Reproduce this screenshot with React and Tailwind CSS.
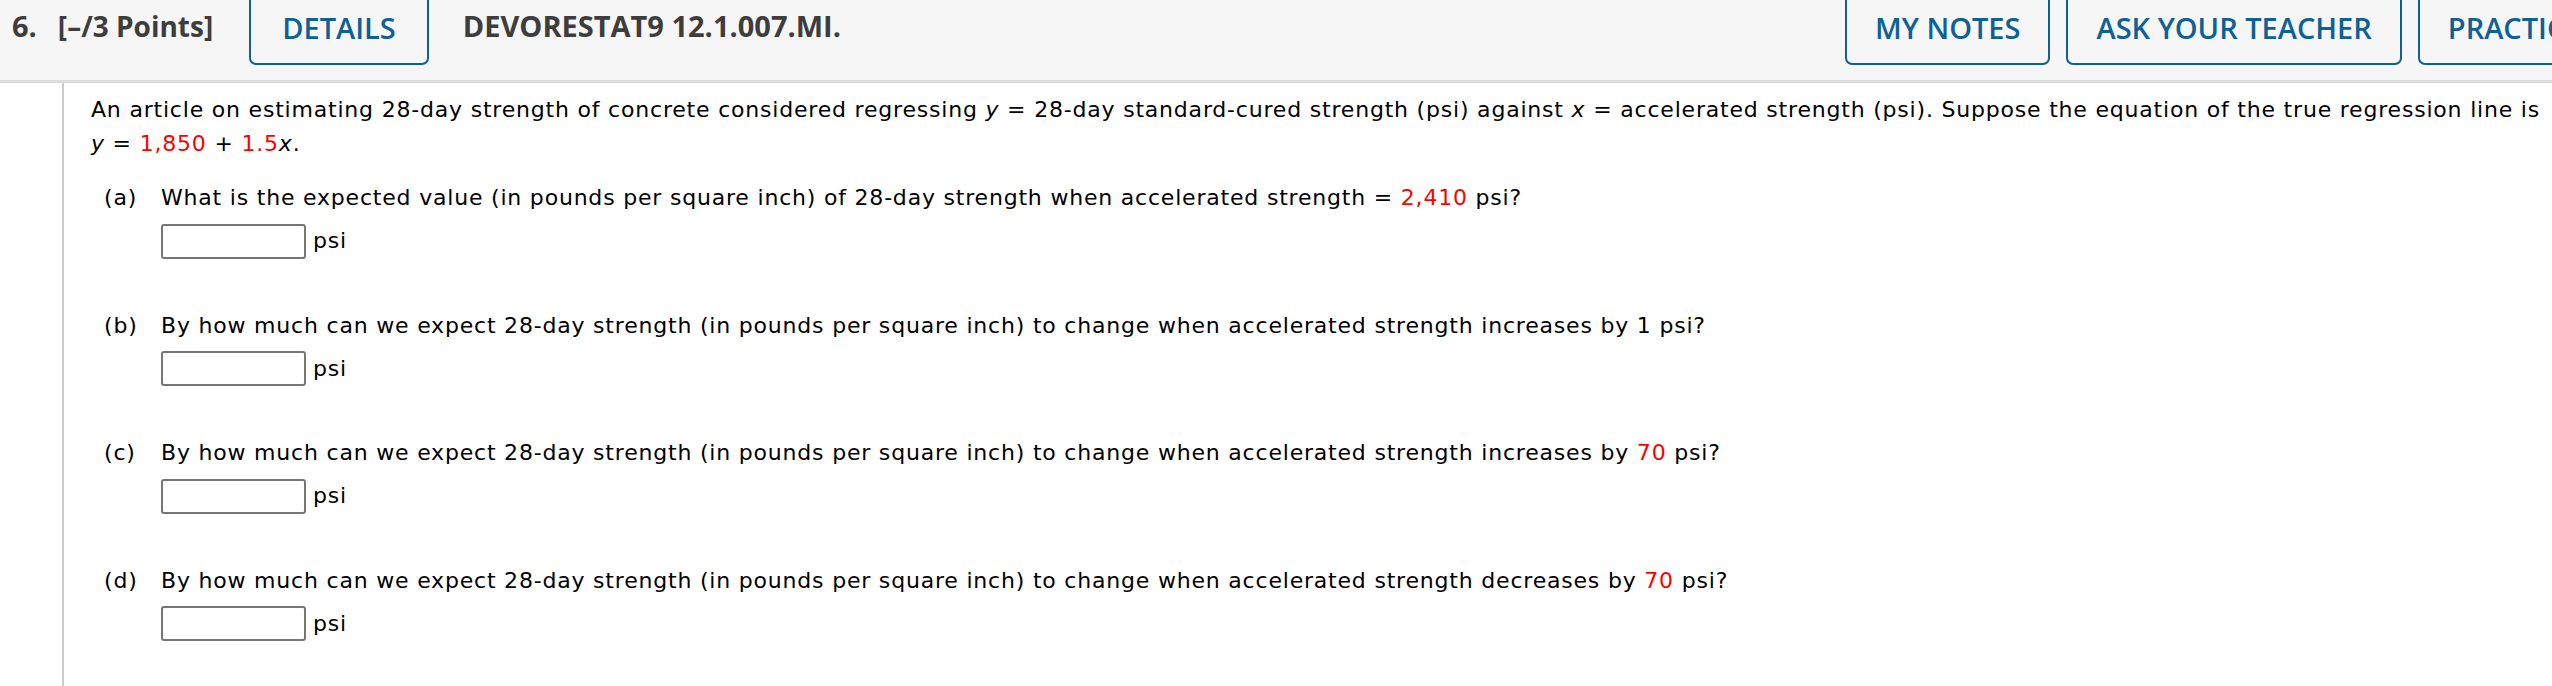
import React from "react";

const HEAD = { fontFamily: '"Open Sans", "Liberation Sans", sans-serif' };
const BODY = { fontFamily: '"DejaVu Sans", Verdana, sans-serif' };

function Red({ children }) {
  return <span className="text-[#ff0000]">{children}</span>;
}

function HeaderButton({ children, wide }) {
  return (
    <div
      className={`-mt-[6px] h-[71px] shrink-0 rounded-b-[7px] border-2 border-[#0e6194] bg-[#f6f6f6] pt-[12px] font-semibold text-[29px] leading-[40px] text-[#0e6194] whitespace-nowrap ${
        wide ? "px-[31px]" : "px-[28px]"
      }`}
    >
      {children}
    </div>
  );
}

function Answer() {
  return (
    <div className="mt-[9px] flex h-[35px] items-center">
      <div className="h-[35px] w-[145px] rounded-[3px] border-2 border-[#767676] bg-white" />
      <span className="ml-[7px]">psi</span>
    </div>
  );
}

function Question({ label, children }) {
  return (
    <div className="ml-[13px] flex">
      <div className="w-[57px] shrink-0">{label}</div>
      <div>
        <div className="whitespace-nowrap">{children}</div>
        <Answer />
      </div>
    </div>
  );
}

export default function App() {
  return (
    <div className="w-[2552px] h-[686px] overflow-hidden bg-white">
      <div
        style={HEAD}
        className="flex h-[83px] items-start overflow-hidden border-b-[3px] border-[#dddddd] bg-[#f6f6f6]"
      >
        <div className="flex shrink-0 items-baseline pl-[12px] pt-[6px] font-bold leading-[40px] text-[#3d3d3d]">
          <span className="text-[29px]">6.</span>
          <span className="ml-[21px] text-[28px]">[–/3 Points]</span>
        </div>
        <div className="ml-[36px]">
          <HeaderButton wide>DETAILS</HeaderButton>
        </div>
        <div className="ml-[34px] shrink-0 pt-[6px] text-[29px] font-bold leading-[40px] text-[#3d3d3d] whitespace-nowrap">
          DEVORESTAT9 12.1.007.MI.
        </div>
        <div className="ml-auto flex w-[707px] shrink-0 gap-[16px] overflow-hidden">
          <HeaderButton>MY NOTES</HeaderButton>
          <HeaderButton>ASK YOUR TEACHER</HeaderButton>
          <HeaderButton>PRACTICE ANOTHER</HeaderButton>
        </div>
      </div>

      <div className="flex h-[603px]">
        <div className="w-[62px] shrink-0" />
        <div
          style={BODY}
          className="flex-1 border-l-2 border-[#cccccc] pl-[27px] pt-[10px] text-[22px] leading-[33.5px] tracking-[0.8px] text-black"
        >
          <p className="mb-[21px] whitespace-nowrap">
            An article on estimating 28-day strength of concrete considered regressing <i>y</i> = 28-day
            standard-cured strength (psi) against <i>x</i> = accelerated strength (psi). Suppose the equation of
            the true regression line is
            <br />
            <i>y</i> = <Red>1,850</Red> + <Red>1.5</Red>
            <i>x</i>.
          </p>

          <div className="flex flex-col gap-[50px]">
            <Question label="(a)">
              What is the expected value (in pounds per square inch) of 28-day strength when accelerated strength ={" "}
              <Red>2,410</Red> psi?
            </Question>
            <Question label="(b)">
              By how much can we expect 28-day strength (in pounds per square inch) to change when accelerated
              strength increases by 1 psi?
            </Question>
            <Question label="(c)">
              By how much can we expect 28-day strength (in pounds per square inch) to change when accelerated
              strength increases by <Red>70</Red> psi?
            </Question>
            <Question label="(d)">
              By how much can we expect 28-day strength (in pounds per square inch) to change when accelerated
              strength decreases by <Red>70</Red> psi?
            </Question>
          </div>
        </div>
      </div>
    </div>
  );
}
